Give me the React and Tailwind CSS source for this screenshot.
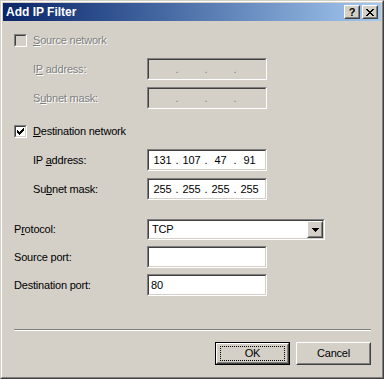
import React from "react";

const Sunken = ({ className = "", inner = "", children }) => (
  <div className={`border border-t-[#808080] border-l-[#808080] border-b-white border-r-white ${className}`}>
    <div className={`h-full w-full border border-t-[#404040] border-l-[#404040] border-b-[#d4d0c8] border-r-[#d4d0c8] ${inner}`}>
      {children}
    </div>
  </div>
);

const Raised = ({ className = "", inner = "", children }) => (
  <div className={`border border-t-white border-l-white border-b-[#404040] border-r-[#404040] bg-[#d4d0c8] ${className}`}>
    <div className={`h-full w-full border border-t-[#d4d0c8] border-l-[#d4d0c8] border-b-[#808080] border-r-[#808080] ${inner}`}>
      {children}
    </div>
  </div>
);

const Check = () => {
  const tops = [2, 3, 4, 3, 2, 1, 0];
  return (
    <svg width="9" height="9" viewBox="0 0 9 9" shapeRendering="crispEdges">
      {tops.map((t, i) => (
        <rect key={i} x={1 + i} y={1 + t} width="1" height="3" fill="#000" />
      ))}
    </svg>
  );
};

const Checkbox = ({ checked, disabled }) => (
  <Sunken className="w-[13px] h-[13px] shrink-0" inner={disabled ? "bg-[#d4d0c8]" : "bg-white"}>
    {checked ? <Check /> : null}
  </Sunken>
);

const IpField = ({ values, disabled }) => {
  const v = values || ["", "", "", ""];
  const dot = disabled ? "text-[#808080]" : "text-black";
  return (
    <Sunken className="w-[120px] h-[22px]" inner={`flex items-center pl-px ${disabled ? "bg-[#d4d0c8]" : "bg-white"}`}>
      <span className="w-[25px] text-center">{v[0]}</span>
      <span className={`w-[4px] text-center ${dot}`}>.</span>
      <span className="w-[25px] text-center">{v[1]}</span>
      <span className={`w-[4px] text-center ${dot}`}>.</span>
      <span className="w-[25px] text-center">{v[2]}</span>
      <span className={`w-[4px] text-center ${dot}`}>.</span>
      <span className="w-[25px] text-center">{v[3]}</span>
    </Sunken>
  );
};

const disabledText = "text-[#808080] [text-shadow:1px_1px_0_#ffffff]";

const CloseGlyph = () => {
  const rows = [
    [[0, 2], [6, 2]],
    [[1, 2], [5, 2]],
    [[2, 4]],
    [[3, 2]],
    [[2, 4]],
    [[1, 2], [5, 2]],
    [[0, 2], [6, 2]],
  ];
  return (
    <svg width="8" height="7" viewBox="0 0 8 7" shapeRendering="crispEdges">
      {rows.map((segs, y) =>
        segs.map(([x, w], k) => <rect key={`${y}-${k}`} x={x} y={y} width={w} height="1" fill="#000" />)
      )}
    </svg>
  );
};

const Arrow = () => (
  <svg width="7" height="4" viewBox="0 0 7 4" shapeRendering="crispEdges">
    <rect x="0" y="0" width="7" height="1" fill="#000" />
    <rect x="1" y="1" width="5" height="1" fill="#000" />
    <rect x="2" y="2" width="3" height="1" fill="#000" />
    <rect x="3" y="3" width="1" height="1" fill="#000" />
  </svg>
);

export default function App() {
  return (
    <div className="w-[384px] h-[379px] bg-[#d4d0c8] border border-t-[#d4d0c8] border-l-[#d4d0c8] border-r-[#404040] border-b-[#404040] font-['Liberation_Sans',Arial,sans-serif] text-[11px] text-black overflow-hidden">
      <div className="h-full border border-t-white border-l-white border-r-[#808080] border-b-[#808080] p-px flex flex-col">
        {/* Title bar */}
        <div className="h-[18px] shrink-0 flex items-center pl-[3px] pr-[3px] bg-linear-to-r from-[#0a246a] to-[#a6caf0]">
          <span className="text-white font-bold text-[12px] leading-none">Add IP Filter</span>
          <div className="ml-auto flex gap-[2px]">
            <Raised className="w-[16px] h-[14px]" inner="flex items-center justify-center">
              <span className="font-bold text-[11px] leading-none text-black">?</span>
            </Raised>
            <Raised className="w-[16px] h-[14px]" inner="flex items-center justify-center">
              <CloseGlyph />
            </Raised>
          </div>
        </div>

        {/* Content */}
        <div className="flex flex-col pl-[11px] pr-[10px] tracking-[-0.2px]">
          {/* Source network */}
          <div className="mt-[13px] h-[13px] flex items-center gap-[6px]">
            <Checkbox disabled />
            <span className={`leading-[13px] ${disabledText}`}>
              <span className="underline">S</span>ource network
            </span>
          </div>
          <div className="mt-[11px] h-[22px] flex items-center">
            <span className={`w-[133px] pl-[19px] ${disabledText}`}>
              I<span className="underline">P</span> address:
            </span>
            <IpField disabled />
          </div>
          <div className="mt-[7px] h-[22px] flex items-center">
            <span className={`w-[133px] pl-[19px] ${disabledText}`}>
              S<span className="underline">u</span>bnet mask:
            </span>
            <IpField disabled />
          </div>

          {/* Destination network */}
          <div className="mt-[16px] h-[13px] flex items-center gap-[6px]">
            <Checkbox checked />
            <span className="leading-[13px]">
              <span className="underline">D</span>estination network
            </span>
          </div>
          <div className="mt-[11px] h-[22px] flex items-center">
            <span className="w-[133px] pl-[19px]">
              IP <span className="underline">a</span>ddress:
            </span>
            <IpField values={["131", "107", "47", "91"]} />
          </div>
          <div className="mt-[7px] h-[22px] flex items-center">
            <span className="w-[133px] pl-[19px]">
              Su<span className="underline">b</span>net mask:
            </span>
            <IpField values={["255", "255", "255", "255"]} />
          </div>

          {/* Protocol */}
          <div className="mt-[19px] h-[21px] flex items-center">
            <span className="w-[133px]">
              P<span className="underline">r</span>otocol:
            </span>
            <Sunken className="w-[178px] h-[21px]" inner="bg-white flex items-center">
              <span className="pl-[3px]">TCP</span>
              <Raised className="ml-auto w-[16px] h-[17px]" inner="flex items-center justify-center">
                <Arrow />
              </Raised>
            </Sunken>
          </div>
          <div className="mt-[6px] h-[22px] flex items-center">
            <span className="w-[133px]">Source port:</span>
            <Sunken className="w-[120px] h-[22px]" inner="bg-white" />
          </div>
          <div className="mt-[6px] h-[22px] flex items-center">
            <span className="w-[133px]">Destination port:</span>
            <Sunken className="w-[120px] h-[22px]" inner="bg-white flex items-center">
              <span className="pl-[2px]">80</span>
            </Sunken>
          </div>

          {/* Separator */}
          <div className="mt-[33px] h-[2px] border-t border-t-[#808080] border-b border-b-white" />

          {/* Buttons */}
          <div className="mt-[11px] flex justify-end gap-[6px]">
            <div className="w-[75px] h-[23px] border border-black">
              <div className="h-full w-full border border-t-white border-l-white border-b-[#404040] border-r-[#404040]">
                <div className="h-full w-full border border-t-[#d4d0c8] border-l-[#d4d0c8] border-b-[#808080] border-r-[#808080] p-[1px] px-[2px]">
                  <div className="h-full w-full border border-dotted border-black flex items-center justify-center">
                    OK
                  </div>
                </div>
              </div>
            </div>
            <Raised className="w-[75px] h-[23px]" inner="flex items-center justify-center">
              Cancel
            </Raised>
          </div>
        </div>
      </div>
    </div>
  );
}
